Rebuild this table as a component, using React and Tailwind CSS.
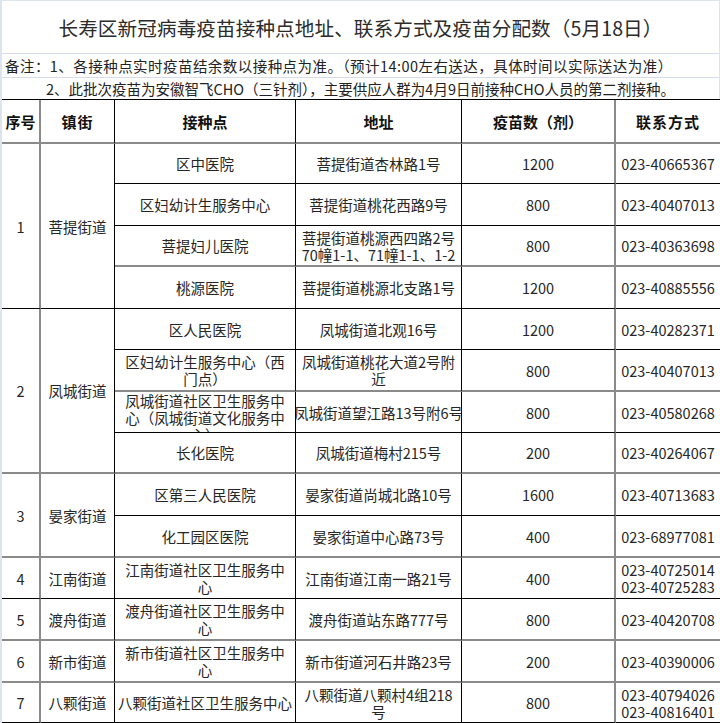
import React from "react";

const GRAY_B = "border-b-2 border-b-[#8a8a8a]";
const BLACK_B = "border-b border-b-black";

function Cell({ col, bottom = "b", span = 1, lines, top = false, header = false, tracking = "" }) {
  const right =
    col === 1 || col === 5
      ? "border-r-2 border-r-[#8a8a8a]"
      : col === 6
      ? ""
      : "border-r border-r-black";
  const spanCls = span === 4 ? "row-span-4" : span === 2 ? "row-span-2" : "";
  const align = top ? "items-start" : "items-center";
  const textCls = header
    ? "text-[15px] font-bold text-[#111]"
    : "text-[14.5px] text-[#262626]";
  return (
    <div
      className={`flex justify-center text-center overflow-hidden leading-[17px] ${align} ${right} ${
        bottom === "g" ? GRAY_B : BLACK_B
      } ${spanCls} ${textCls}`}
    >
      <div className={tracking}>
        {lines.map((l, i) => (
          <div key={i} className="whitespace-nowrap">
            {l}
          </div>
        ))}
      </div>
    </div>
  );
}

function Quad({ site, addr, num, phone, bottom = "b", top = false }) {
  return (
    <>
      <Cell col={3} bottom={bottom} lines={site} top={top} />
      <Cell col={4} bottom={bottom} lines={addr} />
      <Cell col={5} bottom={bottom} lines={num} />
      <Cell col={6} bottom={bottom} lines={phone} />
    </>
  );
}

export default function App() {
  return (
    <div className="w-[720px] h-[723px] overflow-hidden bg-white border-l-2 border-l-[#dde4ee] font-['Noto_Sans_CJK_SC',sans-serif]">
      {/* Title */}
      <div className="h-[53px] border-t border-t-[#dde4ee] border-r border-r-[#dde4ee] flex items-center justify-center">
        <div className="text-[19.6px] leading-[24px] text-[#2b2b2b] whitespace-nowrap pt-[2px] tracking-[0.1px]">
          长寿区新冠病毒疫苗接种点地址、联系方式及疫苗分配数（5月18日）
        </div>
      </div>
      {/* Remarks */}
      <div className="h-[24px] border-t border-t-[#d7dde8] border-r border-r-[#dde4ee] flex items-center pl-[3px]">
        <div className="text-[14.5px] leading-[17px] text-[#222] whitespace-nowrap tracking-[0.45px]">
          备注：1、各接种点实时疫苗结余数以接种点为准。（预计14:00左右送达，具体时间以实际送达为准）
        </div>
      </div>
      <div className="h-[22px] border-t border-t-[#d7dde8] border-r border-r-[#dde4ee] flex items-center justify-center">
        <div className="text-[14.5px] leading-[17px] text-[#222] whitespace-nowrap">
          2、此批次疫苗为安徽智飞CHO（三针剂），主要供应人群为4月9日前接种CHO人员的第二剂接种。
        </div>
      </div>

      {/* Table */}
      <div className="grid grid-cols-[39px_74px_181px_166px_154px_104px] grid-rows-[44px_40px_42px_41px_42px_41px_42px_41px_41px_42px_42px_41px_42px_42px_40px] border-t border-t-black">
        {/* Header */}
        <Cell col={1} bottom="g" header lines={["序号"]} />
        <Cell col={2} bottom="g" header lines={["镇街"]} tracking="tracking-[1px]" />
        <Cell col={3} bottom="g" header lines={["接种点"]} />
        <Cell col={4} bottom="g" header lines={["地址"]} />
        <Cell col={5} bottom="g" header lines={["疫苗数（剂）"]} />
        <Cell col={6} bottom="g" header lines={["联系方式"]} tracking="tracking-[1px]" />

        {/* Group 1 */}
        <Cell col={1} span={4} lines={["1"]} />
        <Cell col={2} span={4} lines={["菩提街道"]} />
        <Quad site={["区中医院"]} addr={["菩提街道杏林路1号"]} num={["1200"]} phone={["023-40665367"]} />
        <Quad site={["区妇幼计生服务中心"]} addr={["菩提街道桃花西路9号"]} num={["800"]} phone={["023-40407013"]} />
        <Quad
          site={["菩提妇儿医院"]}
          addr={["菩提街道桃源西四路2号", "70幢1-1、71幢1-1、1-2"]}
          num={["800"]}
          phone={["023-40363698"]}
          bottom="g"
        />
        <Quad site={["桃源医院"]} addr={["菩提街道桃源北支路1号"]} num={["1200"]} phone={["023-40885556"]} />

        {/* Group 2 */}
        <Cell col={1} span={4} bottom="g" lines={["2"]} />
        <Cell col={2} span={4} bottom="g" lines={["凤城街道"]} />
        <Quad site={["区人民医院"]} addr={["凤城街道北观16号"]} num={["1200"]} phone={["023-40282371"]} />
        <Quad
          site={["区妇幼计生服务中心（西", "门点）"]}
          addr={["凤城街道桃花大道2号附", "近"]}
          num={["800"]}
          phone={["023-40407013"]}
          bottom="g"
        />
        <Quad
          site={["凤城街道社区卫生服务中", "心（凤城街道文化服务中", "心）"]}
          addr={["凤城街道望江路13号附6号"]}
          num={["800"]}
          phone={["023-40580268"]}
          top
        />
        <Quad site={["长化医院"]} addr={["凤城街道梅村215号"]} num={["200"]} phone={["023-40264067"]} bottom="g" />

        {/* Group 3 */}
        <Cell col={1} span={2} bottom="g" lines={["3"]} />
        <Cell col={2} span={2} bottom="g" lines={["晏家街道"]} />
        <Quad site={["区第三人民医院"]} addr={["晏家街道尚城北路10号"]} num={["1600"]} phone={["023-40713683"]} />
        <Quad site={["化工园区医院"]} addr={["晏家街道中心路73号"]} num={["400"]} phone={["023-68977081"]} bottom="g" />

        {/* Row 4 */}
        <Cell col={1} lines={["4"]} />
        <Cell col={2} lines={["江南街道"]} />
        <Quad
          site={["江南街道社区卫生服务中", "心"]}
          addr={["江南街道江南一路21号"]}
          num={["400"]}
          phone={["023-40725014", "023-40725283"]}
        />

        {/* Row 5 */}
        <Cell col={1} bottom="g" lines={["5"]} />
        <Cell col={2} bottom="g" lines={["渡舟街道"]} />
        <Quad
          site={["渡舟街道社区卫生服务中", "心"]}
          addr={["渡舟街道站东路777号"]}
          num={["800"]}
          phone={["023-40420708"]}
          bottom="g"
        />

        {/* Row 6 */}
        <Cell col={1} bottom="g" lines={["6"]} />
        <Cell col={2} bottom="g" lines={["新市街道"]} />
        <Quad
          site={["新市街道社区卫生服务中", "心"]}
          addr={["新市街道河石井路23号"]}
          num={["200"]}
          phone={["023-40390006"]}
          bottom="g"
        />

        {/* Row 7 */}
        <Cell col={1} lines={["7"]} />
        <Cell col={2} lines={["八颗街道"]} />
        <Quad
          site={["八颗街道社区卫生服务中心"]}
          addr={["八颗街道八颗村4组218", "号"]}
          num={["800"]}
          phone={["023-40794026", "023-40816401"]}
        />
      </div>
    </div>
  );
}
